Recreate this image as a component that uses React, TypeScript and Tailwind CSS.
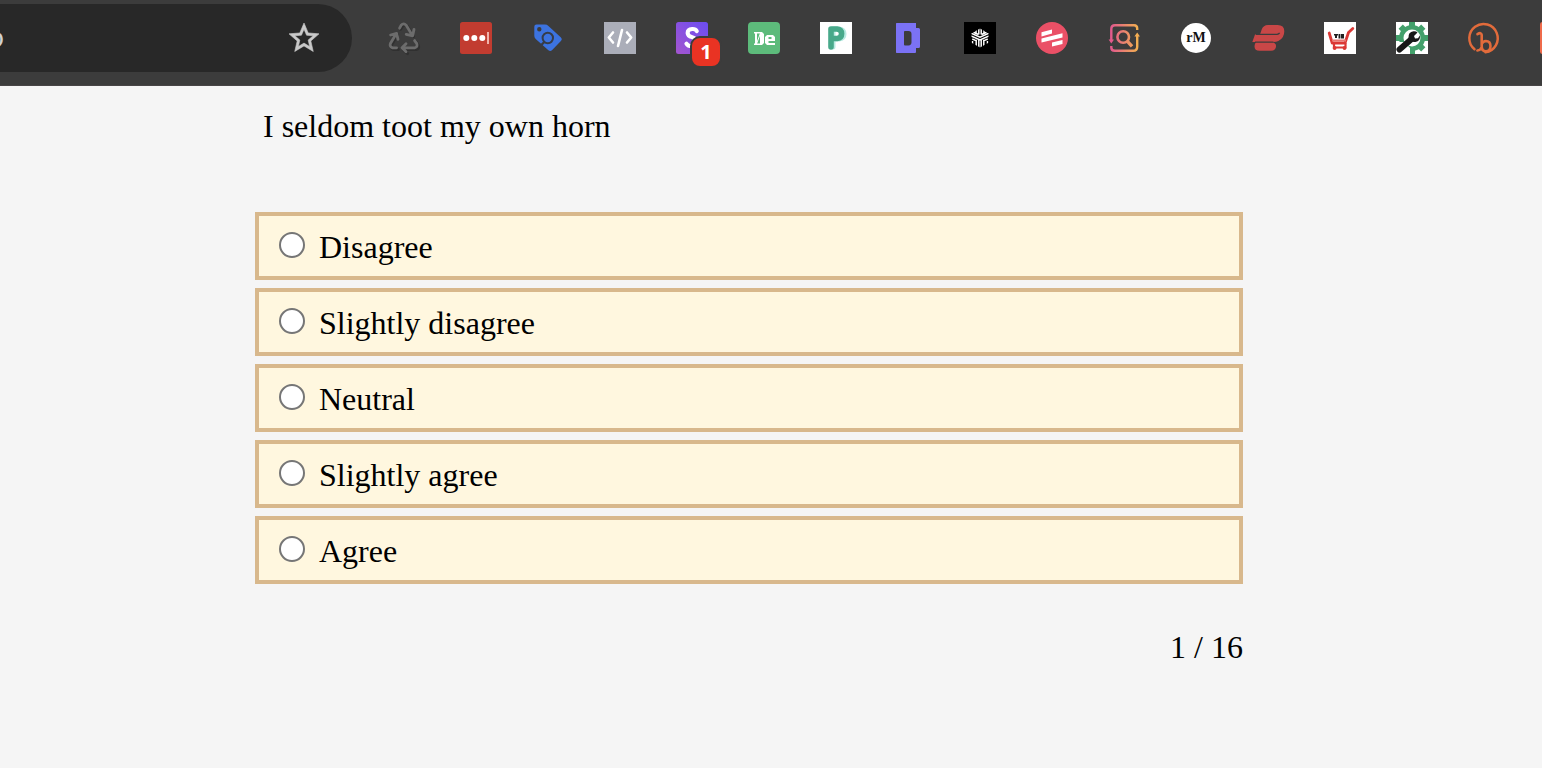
import type { ReactNode } from "react";

type Extension = { name: string; icon: ReactNode; badge?: string };

const extensions: Extension[] = [
  {
    name: "Recycle",
    icon: (
      <>
        <g fill="none" stroke="#303030" strokeWidth="3" transform="translate(1 1)" strokeLinecap="round" strokeLinejoin="round">
          <path d="M11.6 6.2 13.4 3.2Q15.8.4 18.4 3.2L24.5 13.4" />
          <path d="M9.4 26.6H4.6Q1.2 25.4 2.4 22L8.6 11.8" />
          <path d="M27 18.6 29.2 22Q30.6 25.8 27 26.6H14.4M18.6 30.6 14 26.6" />
        </g>
        <g fill="none" stroke="#6c6c6c" strokeWidth="2.8" strokeLinecap="round" strokeLinejoin="round">
          <path d="M11.6 6.2 13.2 3.2Q15.6.4 18.2 3.2L24.3 13.4M26 7.4 24.7 13.8 18.2 12.4" />
          <path d="M8.6 25.8H4.6Q1.2 24.800 2.400 21.500L8.200 11.800M2.600 13 8.600 11.400 10 17.400" />
          <path d="M26.600 18.600 28.800 21.600Q30 25.200 26.600 25.800H14.400M18 21.800 14 25.800 18 29.800" />
        </g>
      </>
    ),
  },
  {
    name: "Passwords",
    icon: (
      <>
        <rect width="32" height="32" rx="2.5" fill="#c23c30" />
        <circle cx="6.3" cy="16" r="3" fill="#fff" />
        <circle cx="14.3" cy="16" r="3" fill="#fff" />
        <circle cx="22.3" cy="16" r="3" fill="#fff" />
        <path d="M27 10h2v12h-2z" fill="#f0b3ac" />
      </>
    ),
  },
  {
    name: "Price tag",
    icon: (
      <>
        <path
          fill="#3c73e0"
          fillRule="evenodd"
          d="M4.500 2.500H13q2 0 3.400 1.400L28.700 15.300q2 1.900.2 3.800l-8.700 8.900q-1.800 1.900-3.800.3L3.700 17Q2.300 15.700 2.300 14V4.800q0-2.300 2.200-2.300ZM7.300 5a2.200 2.200 0 1 0 0 4.400 2.200 2.200 0 0 0 0-4.400Z"
        />
        <circle cx="15.8" cy="16" r="5.2" fill="none" stroke="#363c49" strokeWidth="2" />
        <path d="m12.300 20-4 4" stroke="#363c49" strokeWidth="2.4" />
      </>
    ),
  },
  {
    name: "Code",
    icon: (
      <>
        <rect width="32" height="32" fill="#abaeb9" />
        <path
          d="m9 10.500-4.200 5 4.200 5M23 10.500l4.200 5-4.200 5M18 8l-4 16"
          fill="none"
          stroke="#fff"
          strokeWidth="2.6"
          strokeLinecap="round"
          strokeLinejoin="round"
        />
      </>
    ),
  },
  {
    name: "Notifications",
    badge: "1",
    icon: (
      <>
        <defs>
          <linearGradient id="violet" x1="0" y1="1" x2="1" y2="0">
            <stop offset="0" stopColor="#a455cf" />
            <stop offset="1" stopColor="#6a4df2" />
          </linearGradient>
        </defs>
        <rect width="32" height="32" rx="2.5" fill="url(#violet)" />
        <path
          d="M20.800 9.200Q19.600 6.800 16.200 7 11.600 7.400 11.600 11 11.800 14 16 15.200 20.400 16.600 20.400 20 20 24 15.600 24.200 12 24.200 10.400 21.600"
          fill="none"
          stroke="#fff"
          strokeWidth="4"
          strokeLinecap="round"
        />
      </>
    ),
  },
  {
    name: "De",
    icon: (
      <>
        <rect width="32" height="32" rx="4" fill="#5dbb7b" />
        <path
          fill="#fff"
          fillRule="evenodd"
          d="M6 10h8l2 2v9l-2 2H6v-1.500h1v-10H6ZM9 11.500v10h3v-10ZM19 13h6l2 2v4h-6.500v2H27v2h-8l-2-2v-6ZM20.500 15v2h3v-2Z"
        />
        <path d="M12.500 11 8.500 22" stroke="#fff" strokeWidth="1" />
      </>
    ),
  },
  {
    name: "P",
    icon: (
      <>
        <rect width="32" height="32" fill="#fff" />
        <path d="M13 25V7h6q5 .5 5 5t-5 5h-6" fill="none" stroke="#b9ebe2" strokeWidth="5" strokeLinecap="round" strokeLinejoin="round" />
        <path d="M11 25V7h6q4.600.5 4.600 4.700T17 16.500h-6" fill="none" stroke="#48a98a" strokeWidth="5.6" strokeLinecap="round" strokeLinejoin="round" />
      </>
    ),
  },
  {
    name: "D",
    icon: (
      <path
        fill="#7b72f5"
        fillRule="evenodd"
        d="M4.500 1H24v5h2.500q1.500 0 1.500 1.500v17q0 1.500-1.500 1.500H24v4q0 1-1 1H4.500Q4 31 4 30V2q0-1 .5-1ZM12.800 9q-.8 0-.8 1v12.500q0 1 1 1h3.500q3-.2 3-3.200V12q0-3-3-3Z"
      />
    ),
  },
  {
    name: "Cube",
    icon: (
      <>
        <defs>
          <clipPath id="hexagon">
            <path d="m16 6.600 8.500 4.700v9.400L16 25.400l-8.500-4.700v-9.400Z" />
          </clipPath>
        </defs>
        <rect width="32" height="32" fill="#000" />
        <g fill="none" stroke="#fff" strokeWidth="1.500" clipPath="url(#hexagon)">
          <path d="M14.800 6v6.500M17.200 6v6.500M12 8v3.500M20 8v3.500" />
          <path d="M7 11.200 16 15.300l9-4.100M7 14 16 18l9-4M9.500 10.200l5 2.300M22.500 10.200l-5 2.300" />
          <path d="M14.800 18v8M17.200 18v8M12.200 17.800V26M19.800 17.800V26M8.300 17l3 1.400M23.700 17l-3 1.400M8.500 19v4M23.500 19v4" />
        </g>
      </>
    ),
  },
  {
    name: "Stripes",
    icon: (
      <>
        <circle cx="16" cy="16" r="16" fill="#ea5066" />
        <path fill="#fff" d="M5.500 10.200 16 7.600v4L5.500 14.400ZM5.500 16.400l21-5.200v4.200l-21 5.200ZM16 20.500l10.500-2.600v4.200L16 24.600Z" />
      </>
    ),
  },
  {
    name: "Search sync",
    icon: (
      <>
        <defs>
          <linearGradient id="sunset" gradientUnits="userSpaceOnUse" x1="1" y1="0" x2="31" y2="0">
            <stop offset="0" stopColor="#e05391" />
            <stop offset="1" stopColor="#f3b34e" />
          </linearGradient>
        </defs>
        <g fill="none" stroke="url(#sunset)" strokeWidth="2.400">
          <path d="M29.200 8V6.500Q29.200 3.200 26 3.200H7Q3.300 3.200 3.300 7v12M3.300 24v1.500q0 3.300 3.500 3.300H25q4.200 0 4.200-4V14" />
          <circle cx="15.200" cy="15" r="5.800" strokeWidth="2.600" />
          <path d="m19.200 19.200 4.800 5.200" strokeWidth="3.400" />
        </g>
        <path fill="#e35a8c" d="M.6 17.600H6l-2.700 4Z" />
        <path fill="#f3ad52" d="M26.400 14.600H32l-2.800-4.200Z" />
      </>
    ),
  },
  {
    name: "rM",
    icon: (
      <>
        <circle cx="16" cy="16" r="15" fill="#fff" />
        <text x="16" y="20" textAnchor="middle" fontFamily="Liberation Serif, serif" fontWeight="700" fontSize="14" fill="#111">
          rM
        </text>
      </>
    ),
  },
  {
    name: "Ribbon",
    icon: (
      <>
        <path
          fill="#c94747"
          d="M8 12.500 9.700 7.500Q11.300 3 16 3h9.500q6.800 0 6.800 6.200 0 7-6 9.800-2 1-5 1-.2 1 1 1 1.800.8 1.800 3-.3 4.800-5 4.800H7.500q-5 0-5-4.500 0-2.300 1.600-4.300H.3L3 12.500Z"
        />
        <path d="M4 12.400H25q1.800-.2 2.600-1.500M3 20.200H21.500" fill="none" stroke="#3c3c3c" strokeWidth="1.200" />
      </>
    ),
  },
  {
    name: "Cart",
    icon: (
      <>
        <rect width="32" height="32" fill="#fff" />
        <path d="M5.200 11 8.200 21H21L24.500 10.500l4.300-4" fill="none" stroke="#db3835" strokeWidth="2.800" strokeLinejoin="round" strokeLinecap="round" />
        <path d="M8 18.500h14" stroke="#e87772" strokeWidth="2" />
        <path d="M10 12h4v1.500h-1V16h-2v-2.500h-1ZM14.500 12H16v4.500h-1.500ZM16.600 12H20v4.500h-3.400Z" fill="#202020" />
        <path d="M10 21v4.500h11.500V21" fill="none" stroke="#db3835" strokeWidth="2.200" />
        <circle cx="10.600" cy="26" r="1.900" fill="#db3835" />
        <circle cx="20.500" cy="26" r="1.900" fill="#db3835" />
      </>
    ),
  },
  {
    name: "Tools",
    icon: (
      <>
        <rect width="32" height="32" fill="#fff" />
        <g stroke="#43a06b" strokeWidth="6">
          <path d="M16 0v32M0 16h32M4.700 4.700l22.600 22.600M4.700 27.300 27.300 4.700" />
        </g>
        <circle cx="16" cy="16" r="13" fill="#43a06b" />
        <circle cx="16" cy="16" r="8.500" fill="#fff" />
        <path d="M0 20h8l6 6v6H0Z" fill="#fff" />
        <path d="M3.500 27.500 15 17.500" stroke="#181818" strokeWidth="6" strokeLinecap="round" />
        <path d="M21.500 10.500 18 14l1 2.500 3-.3 2-3Q24.500 19 19.500 20 14 20.500 12.500 16 12 10 17.500 9.300q2.500-.2 4 1.200Z" fill="#181818" />
      </>
    ),
  },
  {
    name: "b",
    icon: (
      <g fill="none" stroke="#e26b3b" strokeLinecap="round">
        <path d="M6.500 27.200A14.200 14.200 0 1 1 17.500 30.300" strokeWidth="2.500" />
        <path d="M9.500 12.200q3.800-2.400 4.200.8V24q0 5.400 4.200 5.400 4.600-.3 4.600-5.400-.2-5-4.600-5-3.200.2-4.200 3.200M13.400 25.500q-.8 2.800-4 3" strokeWidth="2.600" />
      </g>
    ),
  },
  { name: "More", icon: <rect width="32" height="32" rx="2.500" fill="#ef6b4b" /> },
];

const answers = ["Disagree", "Slightly disagree", "Neutral", "Slightly agree", "Agree"];

function Toolbar() {
  return (
    <header className="flex h-[86px] items-start gap-4 overflow-hidden border-b border-[#484546] bg-[#3c3c3c] pt-1">
      <div className="flex h-[68px] w-[352px] shrink-0 items-center overflow-hidden rounded-r-full bg-[#282828] pr-[30px]">
        <input
          aria-label="Address"
          defaultValue="o"
          className="-ml-3 min-w-0 flex-1 bg-transparent font-['Roboto',sans-serif] text-[28px] leading-8 text-[#d0d0d0] outline-none"
        />
        <button type="button" aria-label="Bookmark this page" className="shrink-0">
          <svg viewBox="0 0 24 24" className="size-9" fill="#c9c9c9" stroke="#c9c9c9" strokeWidth="0.4">
            <path d="M22 9.240l-7.190-.620L12 2 9.190 8.630 2 9.240l5.460 4.730L5.820 21 12 17.270 18.180 21l-1.630-7.030L22 9.240zM12 15.400l-3.760 2.270 1-4.280-3.320-2.880 4.380-.38L12 6.100l1.710 4.040 4.380.38-3.320 2.880 1 4.280L12 15.400z" />
          </svg>
        </button>
      </div>
      <nav aria-label="Extensions" className="flex">
        {extensions.map(({ name, icon, badge }) => (
          <button
            key={name}
            type="button"
            aria-label={name}
            className="relative flex h-[68px] w-[72px] shrink-0 items-center justify-center"
          >
            <svg viewBox="0 0 32 32" className="size-8 overflow-visible">
              {icon}
            </svg>
            {badge && (
              <span className="absolute top-8 left-[34px] flex size-8 items-center justify-center rounded-[10px] border-2 border-[#3c3c3c] bg-[#e93323] font-['Open_Sans',sans-serif] text-xl leading-6 font-bold text-white">
                {badge}
              </span>
            )}
          </button>
        ))}
      </nav>
    </header>
  );
}

export default function App() {
  return (
    <div className="min-h-screen bg-[#f5f5f5] font-['Liberation_Serif',serif] text-[32px] leading-9 text-black">
      <Toolbar />
      <main className="pr-11">
        <form className="mx-auto max-w-[988px] pt-[22px]">
          <fieldset>
            <legend className="px-2">I seldom toot my own horn</legend>
            <div className="flex flex-col gap-2 pt-[68px]">
              {answers.map((answer) => (
                <label key={answer} className="flex h-[68px] items-start gap-[14px] border-4 border-[#d8b88c] bg-[#fff7df] px-5">
                  <input
                    type="radio"
                    name="answer"
                    value={answer}
                    className="mt-4 size-[26px] shrink-0 appearance-none rounded-full border-2 border-[#767676] bg-white checked:border-8 checked:border-[#0075ff]"
                  />
                  <span className="pt-[13px]">{answer}</span>
                </label>
              ))}
            </div>
          </fieldset>
          <p className="pt-[45px] text-right">1 / 16</p>
        </form>
      </main>
    </div>
  );
}
